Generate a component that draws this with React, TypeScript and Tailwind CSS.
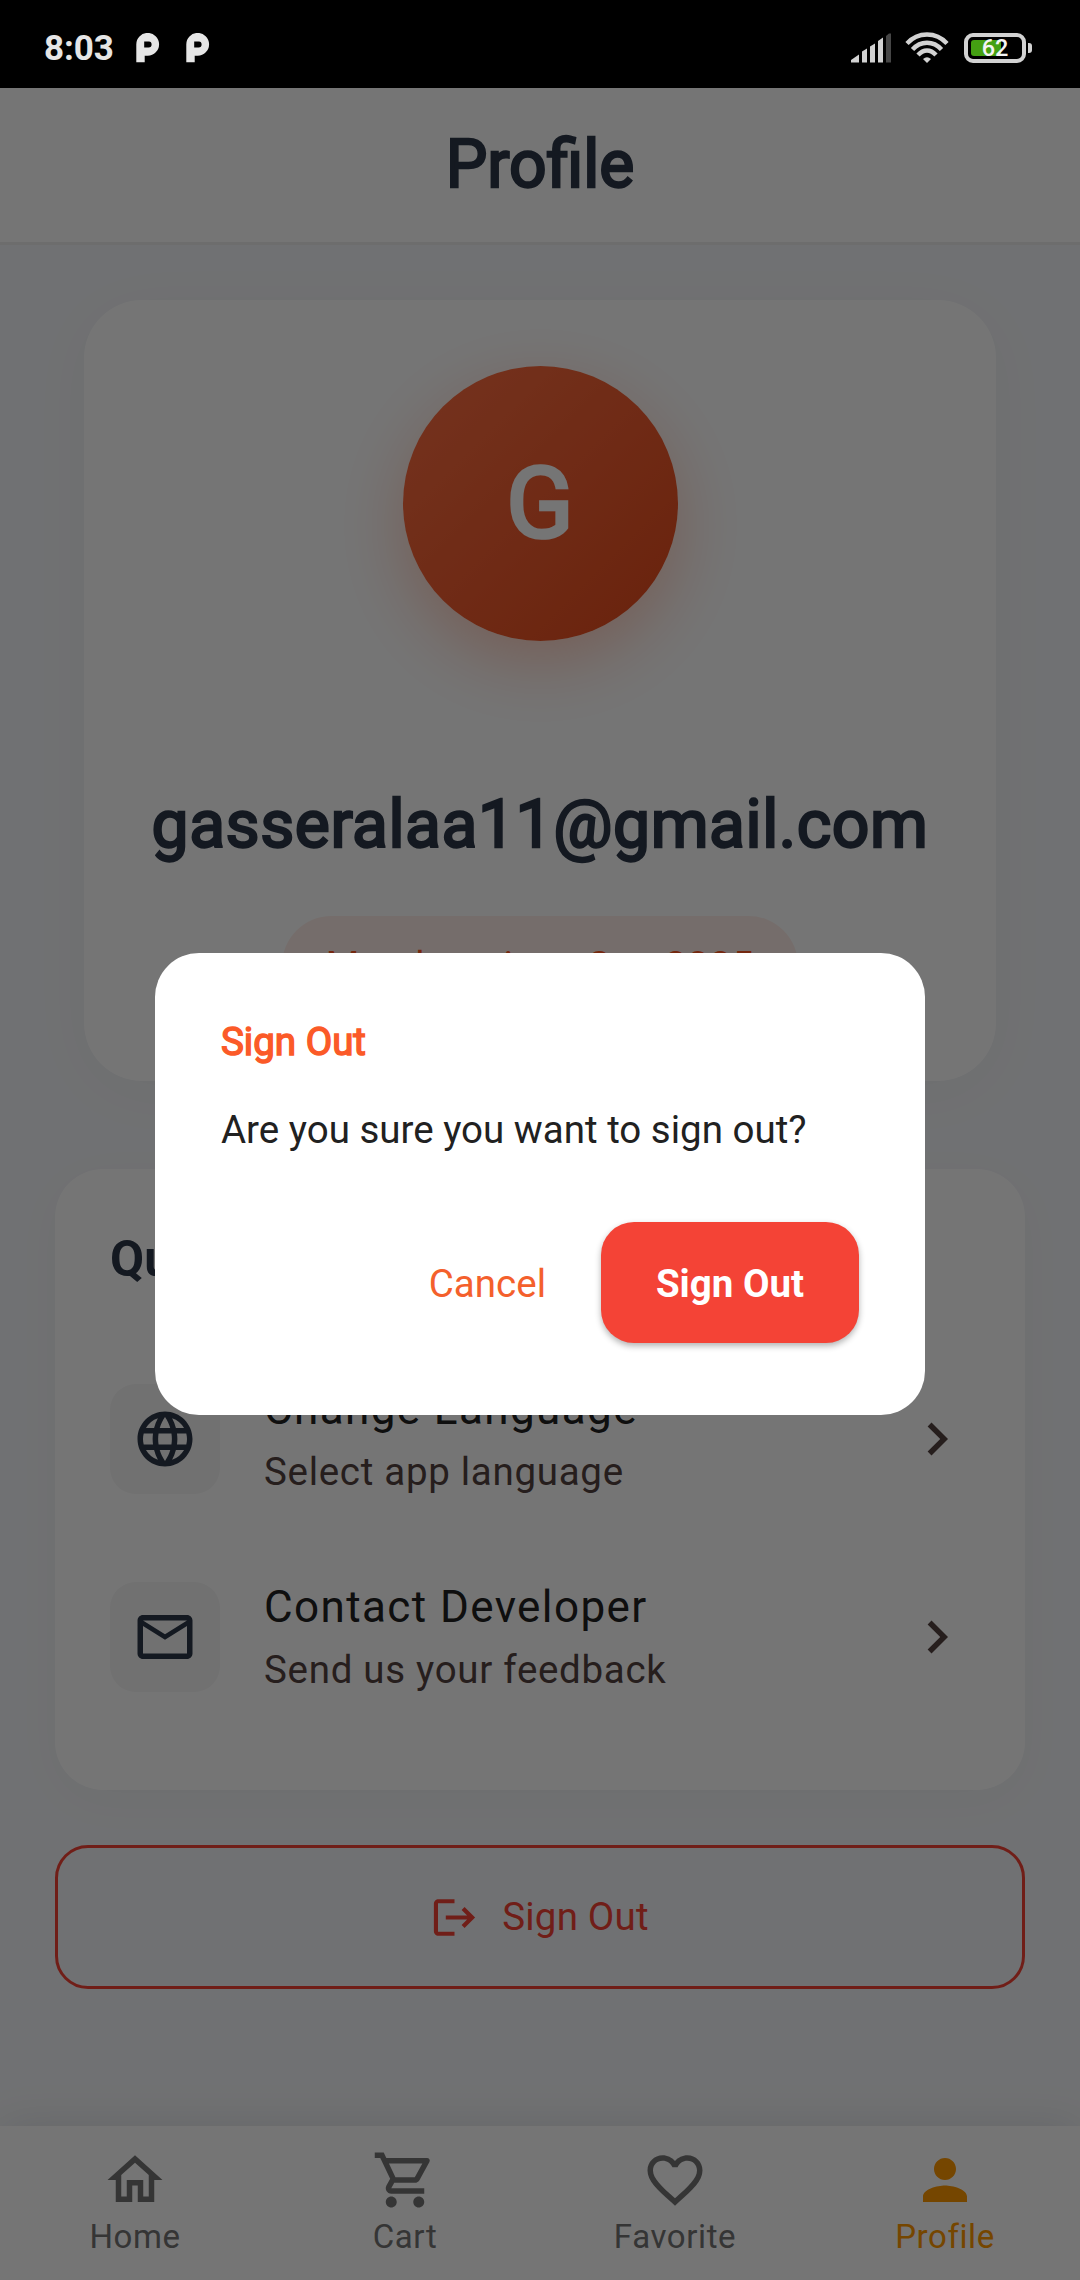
import React from "react";
import {
  MdLanguage,
  MdMailOutline,
  MdChevronRight,
  MdOutlineHome,
  MdOutlineShoppingCart,
  MdFavoriteBorder,
  MdPerson,
} from "react-icons/md";

function PIcon() {
  return (
    <svg width="24" height="30" viewBox="0 0 24 30" className="block">
      <path
        fill="#e6e6e6"
        fillRule="evenodd"
        d="M0.3 29.3V11.6A11.4 11.4 0 1 1 11.7 22.7H8.7V29.3ZM8.2 8.4h4.8q2.6 0 2.6 3t-3 3H8.2Z"
      />
    </svg>
  );
}

function LogoutIcon() {
  return (
    <svg width="55" height="55" viewBox="0 0 24 24" fill="currentColor" className="mr-[20px] block">
      <path d="M16.4 7.4L15.100 8.700L17.500 11.100H8.200v1.800h9.300L15.100 15.300L16.400 16.600L21 12Z" />
      <path d="M5 5.800h7V4H5c-1.100 0-2 .9-2 2v12c0 1.100.9 2 2 2h7v-1.800H4.800V5.800z" />
    </svg>
  );
}

function StatusBar() {
  return (
    <div className="flex h-[88px] shrink-0 items-center bg-black pl-[44px] pr-[48px] pt-[7px]">
      <span className="mt-[2px] text-[35px] leading-[40px] font-bold tracking-[-0.1px] text-[#e6e6e6]">8:03</span>
      <div className="ml-[22px] flex gap-[26px]">
        <PIcon />
        <PIcon />
      </div>
      <div className="ml-auto flex items-center">
        <svg width="41" height="30" viewBox="0 0 41 30" className="block">
          <path fill="#d2d2d2" d="M0 29.500V27L8 21.500V29.500ZM11 29.500V18.500L16 15.500V29.500ZM19 29.500V13.500L24 10.500V29.500ZM27 29.500V8L32 4.500V29.500Z" />
          <path fill="#464646" d="M35 29.500V3L38 0.500H40V29.500Z" />
        </svg>
        <svg width="44" height="32" viewBox="0 0 44 32" className="mr-[1px] ml-[13px] block" fill="none" stroke="#d2d2d2" strokeWidth="4.4">
          <path d="M2 11.500C13-.5 31-.5 42 11.500" />
          <path d="M7.500 17.500C15.500 8.500 28.500 8.500 36.500 17.500" />
          <path d="M13 23C18.500 17 25.500 17 31 23" />
          <path d="M18 27Q22 23.500 26 27L22 31Z" fill="#d2d2d2" stroke="none" />
        </svg>
        <div className="relative ml-[14px] flex h-[30px] w-[62px] items-center justify-center rounded-[9px] border-4 border-[#d2d2d2]">
          <div className="absolute top-[3px] left-[3px] h-[16px] w-[30px] rounded-l-[3px] bg-[#44a012]" />
          <span className="relative text-[23.5px] leading-[22px] font-medium text-[#f4f4f4]">62</span>
        </div>
        <div className="ml-[2px] h-[10px] w-[4px] rounded-r-[3px] bg-[#d2d2d2]" />
      </div>
    </div>
  );
}

function ActionRow({ icon, title, subtitle }: { icon: React.ReactNode; title: string; subtitle: string }) {
  return (
    <div className="flex h-[110px] items-center">
      <div className="flex h-[110px] w-[110px] items-center justify-center rounded-[26px] bg-[#f6f6f6] text-[66px] text-[#2d3748]">
        {icon}
      </div>
      <div className="ml-[44px] flex-1">
        <div className="text-[44px] leading-[60px] tracking-[1.4px] text-[#212121]">{title}</div>
        <div className="mt-[5px] text-[38.5px] leading-[56px] tracking-[0.7px] text-[#53433f]">{subtitle}</div>
      </div>
      <MdChevronRight className="text-[66px] text-[#53433f]" />
    </div>
  );
}

function NavItem({ icon, label, active }: { icon: React.ReactNode; label: string; active?: boolean }) {
  return (
    <div className={active ? "flex flex-1 flex-col items-center text-[#ff9800]" : "flex flex-1 flex-col items-center text-[#757575]"}>
      <div className="text-[66px]">{icon}</div>
      <div className="mt-[4px] text-[33px] leading-[40px] tracking-[0.6px]">{label}</div>
    </div>
  );
}

export default function App() {
  return (
    <div className="relative flex h-[2280px] w-[1080px] flex-col overflow-hidden bg-[#f5f7fa] font-[Roboto,sans-serif]">
      <StatusBar />
      <header className="flex h-[157px] shrink-0 items-center justify-center border-b-[3px] border-[#eeeeee] bg-white pb-[2px]">
        <h1 className="text-[66px] leading-[77px] font-normal text-[#2d3748] [-webkit-text-stroke:2.4px_#2d3748]">Profile</h1>
      </header>

      <main className="flex flex-1 flex-col px-[55px] pt-[55px]">
        <section className="flex h-[781px] w-[912px] shrink-0 flex-col items-center self-center rounded-[58px] bg-white pt-[66px] shadow-[0_11px_66px_rgba(0,0,0,0.035)]">
          <div className="flex h-[275px] w-[275px] items-center justify-center rounded-full bg-linear-135 from-[#ff7043] to-[#e64a19] text-[99px] font-normal text-white shadow-[0_22px_66px_rgba(255,87,34,0.3)] [-webkit-text-stroke:3.5px_white]">
            G
          </div>
          <div className="mt-[140px] text-[66px] leading-[88px] font-normal tracking-[0.55px] text-[#2d3748] [-webkit-text-stroke:2.4px_#2d3748]">
            gasseralaa11@gmail.com
          </div>
          <div className="mt-[47px] flex h-[99px] items-center rounded-[55px] bg-[#ffeee9] px-[44px] text-[38.5px] tracking-[0.7px] text-[#ff5722]">
            Member since Sep 2025
          </div>
        </section>

        <section className="mt-[88px] flex h-[621px] shrink-0 flex-col rounded-[48px] bg-white px-[55px] pt-[55px] shadow-[0_11px_50px_rgba(0,0,0,0.03)]">
          <h2 className="text-[49.5px] leading-[70px] font-bold text-[#2d3748]">Quick Actions</h2>
          <div className="mt-[90px] flex flex-col gap-[88px]">
            <ActionRow icon={<MdLanguage />} title="Change Language" subtitle="Select app language" />
            <ActionRow icon={<MdMailOutline />} title="Contact Developer" subtitle="Send us your feedback" />
          </div>
        </section>

        <button className="mt-[55px] flex h-[144px] shrink-0 items-center justify-center rounded-[33px] border-[3px] border-[#f44336] pr-[4px] text-[38.5px] tracking-[0.2px] text-[#f44336]">
          <LogoutIcon />
          Sign Out
        </button>
      </main>

      <nav className="flex h-[154px] shrink-0 bg-white pt-[21px] shadow-[0_0_44px_rgba(0,0,0,0.1)]">
        <NavItem icon={<MdOutlineHome />} label="Home" />
        <NavItem icon={<MdOutlineShoppingCart />} label="Cart" />
        <NavItem icon={<MdFavoriteBorder />} label="Favorite" />
        <NavItem icon={<MdPerson />} label="Profile" active />
      </nav>

      <div className="absolute inset-x-0 top-[88px] bottom-0 flex items-center justify-center bg-black/54">
        <div role="dialog" className="flex h-[462px] w-[770px] flex-col rounded-[44px] bg-white px-[66px] pt-[61px]">
          <h3 className="text-[38.5px] leading-[56px] font-normal text-[#fb5a28] [-webkit-text-stroke:1.5px_#fb5a28]">Sign Out</h3>
          <p className="mt-[32px] text-[38.5px] leading-[56px] text-[#212121]">Are you sure you want to sign out?</p>
          <div className="mt-[64px] flex items-center justify-end">
            <button className="mr-[55px] pt-[2px] text-[38.5px] leading-[56px] text-[#f4602c]">Cancel</button>
            <button className="h-[121px] w-[258px] rounded-[33px] bg-[#f44336] pt-[2px] text-[38.5px] font-bold text-white shadow-[0_3px_6px_rgba(0,0,0,0.3)]">
              Sign Out
            </button>
          </div>
        </div>
      </div>
    </div>
  );
}
